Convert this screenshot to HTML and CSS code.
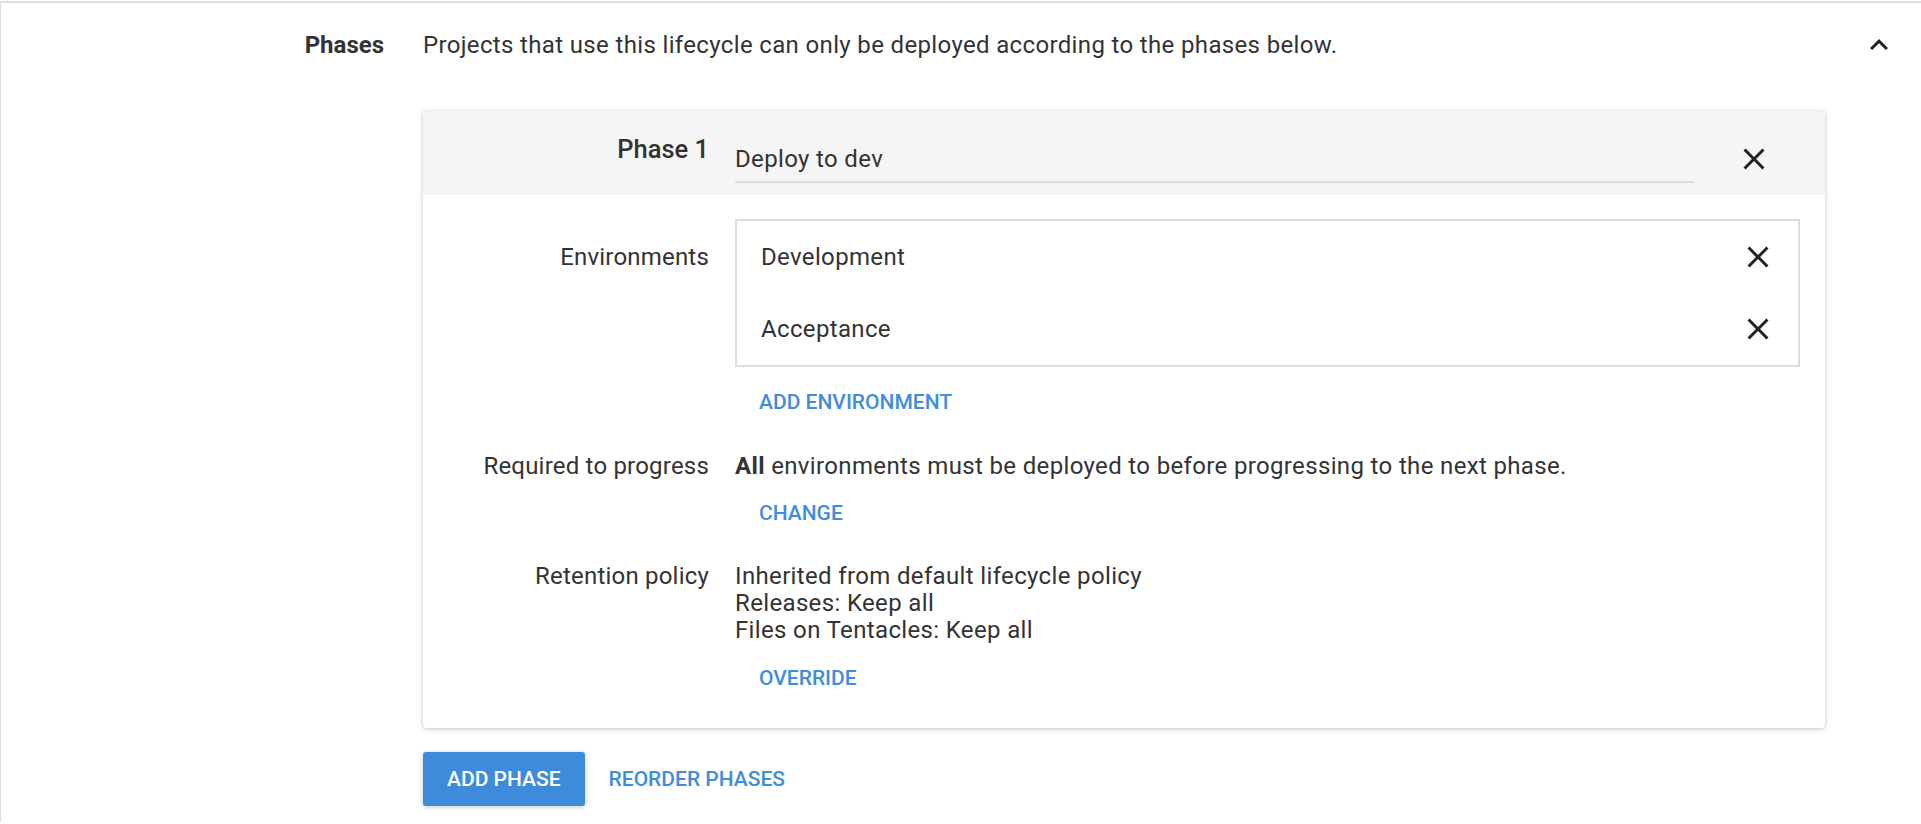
FILE: index.html
```html
<!DOCTYPE html>
<html lang="en">
<head>
<meta charset="utf-8">
<title>Lifecycle phases</title>
<link rel="stylesheet" href="styles.css">
</head>
<body>
<div class="page">
  <div class="section">
    <div class="section-label">Phases</div>
    <div class="section-main">
      <div class="section-desc">Projects that use this lifecycle can only be deployed according to the phases below.</div>

      <div class="card">
        <div class="card-head">
          <div class="phase-title">Phase 1</div>
          <div class="phase-input">Deploy to dev</div>
          <span class="icon head-close">
            <svg viewBox="0 0 24 24" width="36" height="36"><path d="M19 6.41L17.59 5 12 10.59 6.41 5 5 6.41 10.59 12 5 17.59 6.41 19 12 13.41 17.59 19 19 17.59 13.41 12z"/></svg>
          </span>
        </div>

        <div class="card-body">
          <div class="row row-env">
            <div class="row-label env-label">Environments</div>
            <div class="row-value">
              <div class="env-box">
                <div class="env-item">
                  <span class="env-name">Development</span>
                  <span class="icon"><svg viewBox="0 0 24 24" width="36" height="36"><path d="M19 6.41L17.59 5 12 10.59 6.41 5 5 6.41 10.59 12 5 17.59 6.41 19 12 13.41 17.59 19 19 17.59 13.41 12z"/></svg></span>
                </div>
                <div class="env-item">
                  <span class="env-name">Acceptance</span>
                  <span class="icon"><svg viewBox="0 0 24 24" width="36" height="36"><path d="M19 6.41L17.59 5 12 10.59 6.41 5 5 6.41 10.59 12 5 17.59 6.41 19 12 13.41 17.59 19 19 17.59 13.41 12z"/></svg></span>
                </div>
              </div>
              <button class="flat-btn btn-add-env">ADD ENVIRONMENT</button>
            </div>
          </div>

          <div class="row row-req">
            <div class="row-label">Required to progress</div>
            <div class="row-value">
              <div class="req-text"><b>All</b> environments must be deployed to before progressing to the next phase.</div>
              <button class="flat-btn btn-change">CHANGE</button>
            </div>
          </div>

          <div class="row row-ret">
            <div class="row-label ret-label">Retention policy</div>
            <div class="row-value">
              <div class="ret-text">
                <div>Inherited from default lifecycle policy</div>
                <div>Releases: Keep all</div>
                <div>Files on Tentacles: Keep all</div>
              </div>
              <button class="flat-btn btn-override">OVERRIDE</button>
            </div>
          </div>
        </div>
      </div>

      <div class="actions">
        <button class="raised-btn">ADD PHASE</button>
        <button class="flat-btn">REORDER PHASES</button>
      </div>
    </div>
    <span class="icon chevron">
      <svg viewBox="0 0 24 24" width="36" height="36"><path d="M12 8l-6 6 1.41 1.41L12 10.83l4.59 4.58L18 14z"/></svg>
    </span>
  </div>
</div>
</body>
</html>
```

FILE: styles.css
```css
html, body {
  margin: 0;
  padding: 0;
  background: #ffffff;
  overflow: hidden;
}

body {
  font-family: Roboto, "Liberation Sans", Arial, sans-serif;
  font-size: 24px;
  line-height: 36px;
  letter-spacing: 0.35px;
  color: #333333;
}

.page {
  margin-top: 1px;
  border-top: 2px solid #dddddd;
  border-left: 1px solid #dddddd;
  min-height: 821px;
  box-sizing: border-box;
}

.section {
  display: flex;
  align-items: flex-start;
  padding-top: 24px;
}

.section-label {
  width: 383px;
  flex: none;
  text-align: right;
  font-weight: 700;
  letter-spacing: 0;
  margin-right: 39px;
}

.section-main {
  flex: 1;
  min-width: 0;
}

.section-desc {
  height: 36px;
}

.chevron {
  margin-right: 24px;
}

.icon {
  display: inline-flex;
  width: 36px;
  height: 36px;
  flex: none;
}

.icon svg {
  fill: #222222;
  display: block;
}

.card {
  margin-top: 48px;
  margin-right: 36px;
  background: #ffffff;
  border-radius: 4px;
  box-shadow: 0 1px 6px rgba(0, 0, 0, 0.12), 0 1px 4px rgba(0, 0, 0, 0.12);
  overflow: hidden;
}

.card-head {
  display: flex;
  align-items: flex-start;
  height: 84px;
  background: #f5f5f5;
}

.phase-title {
  width: 286px;
  flex: none;
  text-align: right;
  font-size: 25.5px;
  font-weight: 500;
  letter-spacing: 0;
  margin-top: 20px;
  color: #333333;
}

.phase-input {
  width: 959px;
  margin-left: 26px;
  margin-top: 30px;
  padding-bottom: 4px;
  border-bottom: 2px solid #dddddd;
}

.head-close {
  margin-left: 42px;
  margin-top: 30px;
}

.card-body {
  padding: 24px 25px 23px 0;
}

.row {
  display: grid;
  grid-template-columns: 286px 1fr;
  column-gap: 26px;
  align-items: start;
}

.row-label {
  text-align: right;
  letter-spacing: 0.2px;
}

.env-label {
  margin-top: 20px;
}

.env-box {
  border: 2px solid #dddddd;
}

.env-item {
  display: flex;
  align-items: center;
  justify-content: space-between;
  height: 72px;
  padding: 0 22px 0 24px;
}

.flat-btn {
  display: inline-block;
  font-family: Roboto, "Liberation Sans", Arial, sans-serif;
  font-size: 21px;
  font-weight: 500;
  letter-spacing: 0;
  height: 54px;
  line-height: 54px;
  padding: 0 24px;
  border: 0;
  background: transparent;
  color: #3f8ddb;
  border-radius: 3px;
  cursor: pointer;
}

.btn-add-env {
  margin-top: 8px;
}

.row-req {
  margin-top: 19px;
}

.btn-change {
  margin-top: 2px;
}

.row-ret {
  margin-top: 23px;
  line-height: 27px;
}

.btn-override {
  margin-top: 7px;
}

.actions {
  display: flex;
  margin-top: 24px;
}

.raised-btn {
  font-family: Roboto, "Liberation Sans", Arial, sans-serif;
  font-size: 21px;
  font-weight: 500;
  letter-spacing: 0;
  height: 54px;
  line-height: 54px;
  padding: 0 24px;
  border: 0;
  border-radius: 3px;
  background: #3f8bdb;
  color: #ffffff;
  box-shadow: 0 1px 6px rgba(0, 0, 0, 0.12), 0 1px 4px rgba(0, 0, 0, 0.12);
  cursor: pointer;
}
```
